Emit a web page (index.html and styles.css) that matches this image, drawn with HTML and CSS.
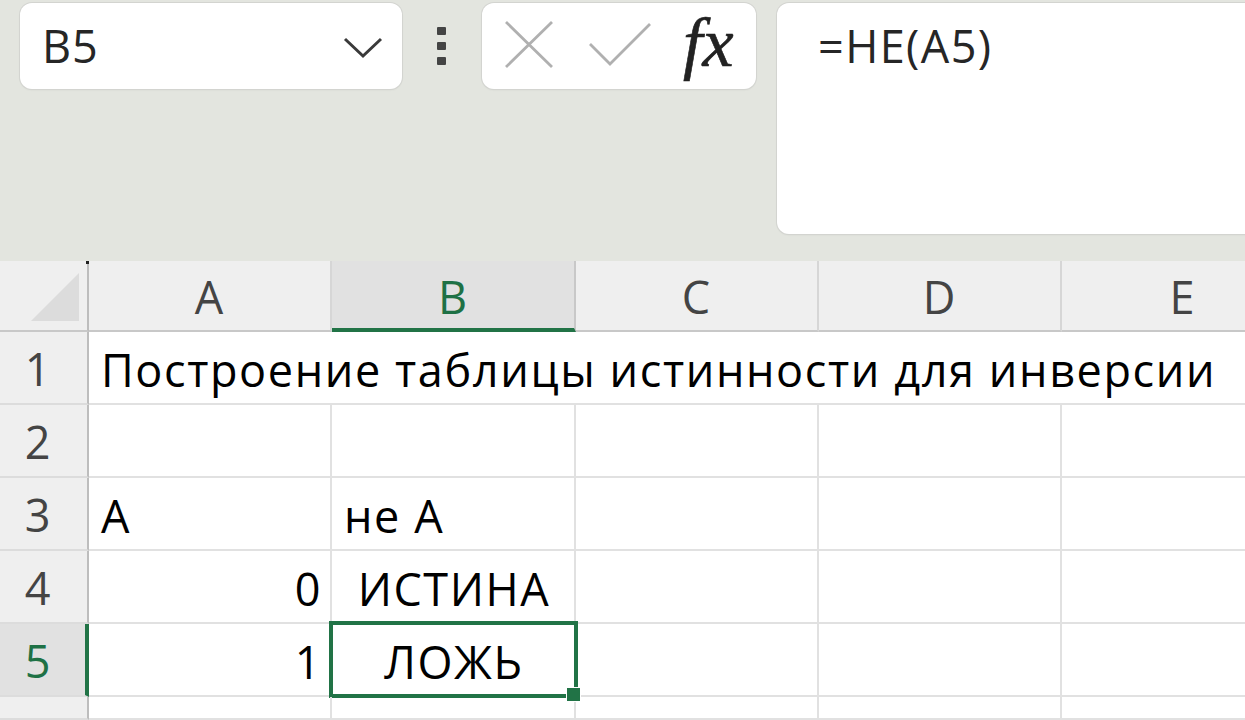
FILE: index.html
```html
<!DOCTYPE html>
<html lang="ru">
<head>
<meta charset="utf-8">
<title>Excel</title>
<link rel="stylesheet" href="styles.css">
</head>
<body>
<div class="toolbar">
  <div class="namebox">
    <span class="namebox-text">B5</span>
    <svg class="chevron" width="40" height="22" viewBox="0 0 40 22"><path d="M2 2 L20 19 L38 2" fill="none" stroke="#3a3a3a" stroke-width="3"/></svg>
  </div>
  <div class="grip"><i></i><i></i><i></i></div>
  <div class="btns">
    <svg class="icon-x" width="50" height="48" viewBox="0 0 50 48"><path d="M2 1 L48 46 M48 1 L2 46" stroke="#b0b0b0" stroke-width="2.8" fill="none"/></svg>
    <svg class="icon-check" width="64" height="44" viewBox="0 0 64 44"><path d="M1 21 L21 41 L61 1" stroke="#b0b0b0" stroke-width="2.8" fill="none"/></svg>
    <span class="fx">fx</span>
  </div>
  <div class="formula">=НЕ(А5)</div>
</div>
<div class="sheet">
  <div class="corner"></div>
  <div class="colhead">A</div>
  <div class="colhead active">B</div>
  <div class="colhead">C</div>
  <div class="colhead">D</div>
  <div class="colhead">E</div>

  <div class="rowhead">1</div>
  <div class="cell wide">Построение таблицы истинности для инверсии</div>

  <div class="rowhead">2</div>
  <div class="cell"></div><div class="cell"></div><div class="cell"></div><div class="cell"></div><div class="cell"></div>

  <div class="rowhead">3</div>
  <div class="cell">А</div><div class="cell">не А</div><div class="cell"></div><div class="cell"></div><div class="cell"></div>

  <div class="rowhead">4</div>
  <div class="cell num">0</div><div class="cell bool">ИСТИНА</div><div class="cell"></div><div class="cell"></div><div class="cell"></div>

  <div class="rowhead active">5</div>
  <div class="cell num">1</div><div class="cell bool selected">ЛОЖЬ<span class="handle"></span></div><div class="cell"></div><div class="cell"></div><div class="cell"></div>

  <div class="rowhead"></div>
  <div class="cell"></div><div class="cell"></div><div class="cell"></div><div class="cell"></div><div class="cell"></div>
</div>
</body>
</html>
```
FILE: styles.css
```css
html, body {
  margin: 0;
  padding: 0;
  width: 1245px;
  height: 720px;
  overflow: hidden;
  background: #e3e5df;
  font-family: "Open Sans", "Noto Sans", sans-serif;
}

.toolbar {
  height: 261px;
  box-sizing: border-box;
  padding: 3px 0 0 20px;
  display: flex;
  align-items: flex-start;
}

.namebox {
  width: 382px;
  height: 86px;
  box-sizing: border-box;
  background: #fff;
  border-radius: 12px;
  box-shadow: 0 0 0 1px #d3d4d0, 0 1px 2px rgba(0,0,0,0.08);
  display: flex;
  align-items: center;
  padding: 0 18px 0 22px;
}
.namebox-text {
  flex: 1;
  font-size: 45px;
  letter-spacing: 1px;
  color: #262626;
  line-height: 86px;
}
.chevron { margin-top: 4px; margin-right: 1px; }

.grip {
  margin-left: 35px;
  margin-top: 24px;
  display: flex;
  flex-direction: column;
  gap: 7px;
}
.grip i {
  display: block;
  width: 9px;
  height: 8px;
  border-radius: 1px;
  background: #444;
}

.btns {
  margin-left: 36px;
  width: 274px;
  height: 86px;
  box-sizing: border-box;
  background: #fff;
  border-radius: 12px;
  box-shadow: 0 0 0 1px #d3d4d0, 0 1px 2px rgba(0,0,0,0.08);
  display: flex;
  align-items: center;
  padding-left: 22px;
}
.icon-x { margin-top: -2px; }
.icon-check { margin-left: 35px; margin-top: -2px; }
.fx {
  margin-left: 30px;
  font-family: "Liberation Serif", "DejaVu Serif", serif;
  font-style: italic;
  font-size: 70px;
  line-height: 86px;
  color: #222;
  margin-top: -6px;
  -webkit-text-stroke: 0.6px #222;
}

.formula {
  margin-left: 21px;
  margin-right: -20px;
  flex: 1;
  height: 231px;
  box-sizing: border-box;
  background: #fff;
  border-radius: 12px;
  box-shadow: 0 0 0 1px #d3d4d0, 0 1px 2px rgba(0,0,0,0.08);
  padding-left: 41px;
  font-size: 45px;
  letter-spacing: 1.4px;
  line-height: 86px;
  color: #262626;
}

.sheet {
  height: 459px;
  display: grid;
  grid-template-columns: 89px 243px 244px 243px 243px 243px;
  grid-template-rows: 71px repeat(5, 73px) 1fr;
  background: #fff;
  font-size: 45px;
  overflow: hidden;
}

.corner {
  position: relative;
  background: #efefef;
  border-right: 2px solid #bdbdbd;
  border-bottom: 2px solid #c8c8c8;
  box-sizing: border-box;
  display: flex;
  align-items: flex-start;
  justify-content: flex-end;
  padding: 12px 8px 0 0;
}
.corner::before {
  content: "";
  width: 48px;
  height: 48px;
  background: #dcdcdc;
  clip-path: polygon(100% 0, 100% 100%, 0 100%);
}
.corner::after {
  content: "";
  position: absolute;
  right: -2px;
  top: 0;
  width: 3px;
  height: 3px;
  background: #222;
}

.colhead {
  background: #efefef;
  border-right: 2px solid #d6d6d6;
  border-bottom: 2px solid #c8c8c8;
  box-sizing: border-box;
  text-align: center;
  line-height: 71px;
  letter-spacing: 1px;
  color: #444;
}
.colhead.active {
  background: #e1e1e1;
  color: #1e7145;
  border-bottom: 4px solid #217346;
  border-right-color: #c8c8c8;
}

.rowhead {
  background: #efefef;
  border-right: 2px solid #bdbdbd;
  border-bottom: 2px solid #dcdcdc;
  box-sizing: border-box;
  text-align: center;
  padding-right: 12px;
  line-height: 73px;
  color: #444;
}
.rowhead.active {
  background: #e1e1e1;
  color: #1e7145;
  border-right: 4px solid #217346;
  padding-right: 10px;
}

.cell {
  position: relative;
  border-right: 2px solid #e1e1e1;
  border-bottom: 2px solid #e1e1e1;
  box-sizing: border-box;
  padding: 2px 10px 0 12px;
  line-height: 71px;
  letter-spacing: 1.6px;
  color: #000;
  white-space: nowrap;
}
.cell.wide { grid-column: 2 / 7; }
.cell.num { text-align: right; padding-right: 8px; }
.cell.bool { text-align: center; padding-left: 10px; padding-right: 8px; }

.cell.selected::after {
  content: "";
  position: absolute;
  left: -3px;
  top: -3px;
  right: -4px;
  bottom: -3px;
  border: 4px solid #217346;
  pointer-events: none;
}
.handle {
  position: absolute;
  right: -7px;
  bottom: -7px;
  width: 13px;
  height: 13px;
  background: #217346;
  border: 1px solid #fff;
  z-index: 2;
}
```
